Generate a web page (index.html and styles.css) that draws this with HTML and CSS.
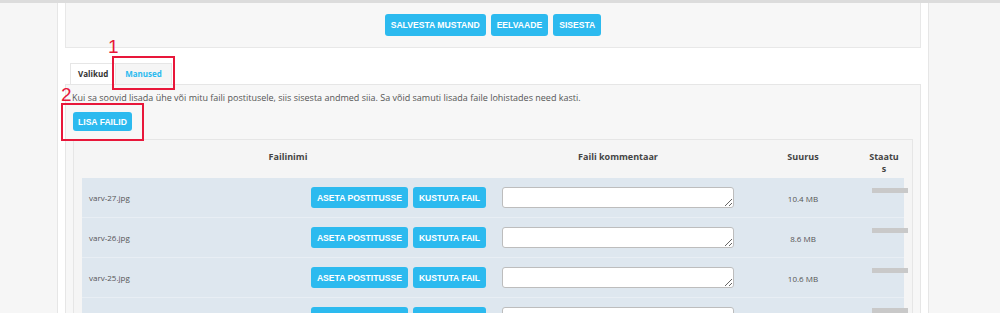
FILE: index.html
```html
<!DOCTYPE html>
<html lang="et">
<head>
    <meta charset="UTF-8">
    <meta name="viewport" content="width=device-width, initial-scale=1.0">
    <title>Manused</title>
    <link rel="stylesheet" href="styles.css">
</head>
<body>
    <div class="page">
        <div class="main">
            <div class="top-panel">
                <button class="btn">Salvesta mustand</button>
                <button class="btn">Eelvaade</button>
                <button class="btn">Sisesta</button>
            </div>

            <div class="tabs">
                <span class="tab active">Valikud</span>
                <span class="tab link">Manused</span>
            </div>

            <div class="tab-panel">
                <p class="hint">Kui sa soovid lisada ühe või mitu faili postitusele, siis sisesta andmed siia. Sa võid samuti lisada faile lohistades need kasti.</p>
                <button class="btn btn-add">Lisa failid</button>

                <div class="files">
                    <div class="files-head">
                        <div class="cell">Failinimi</div>
                        <div class="cell">Faili kommentaar</div>
                        <div class="cell">Suurus</div>
                        <div class="cell status-head">Staatus</div>
                    </div>

                    <div class="file-row">
                        <div class="cell name">
                            <span>varv-27.jpg</span>
                            <span class="actions">
                                <button class="btn btn-sm">Aseta postitusse</button>
                                <button class="btn btn-sm">Kustuta fail</button>
                            </span>
                        </div>
                        <div class="cell"><textarea class="comment"></textarea></div>
                        <div class="cell size">10.4 MB</div>
                        <div class="cell status"><span class="bar"></span></div>
                    </div>

                    <div class="file-row">
                        <div class="cell name">
                            <span>varv-26.jpg</span>
                            <span class="actions">
                                <button class="btn btn-sm">Aseta postitusse</button>
                                <button class="btn btn-sm">Kustuta fail</button>
                            </span>
                        </div>
                        <div class="cell"><textarea class="comment"></textarea></div>
                        <div class="cell size">8.6 MB</div>
                        <div class="cell status"><span class="bar"></span></div>
                    </div>

                    <div class="file-row">
                        <div class="cell name">
                            <span>varv-25.jpg</span>
                            <span class="actions">
                                <button class="btn btn-sm">Aseta postitusse</button>
                                <button class="btn btn-sm">Kustuta fail</button>
                            </span>
                        </div>
                        <div class="cell"><textarea class="comment"></textarea></div>
                        <div class="cell size">10.6 MB</div>
                        <div class="cell status"><span class="bar"></span></div>
                    </div>

                    <div class="file-row">
                        <div class="cell name">
                            <span>varv-24.jpg</span>
                            <span class="actions">
                                <button class="btn btn-sm">Aseta postitusse</button>
                                <button class="btn btn-sm">Kustuta fail</button>
                            </span>
                        </div>
                        <div class="cell"><textarea class="comment"></textarea></div>
                        <div class="cell size">9.8 MB</div>
                        <div class="cell status"><span class="bar"></span></div>
                    </div>
                </div>
            </div>
        </div>
    </div>

    <!-- annotations -->
    <span class="mark-num num-1">1</span>
    <span class="mark-box box-1"></span>
    <span class="mark-num num-2">2</span>
    <span class="mark-box box-2"></span>
</body>
</html>
```

FILE: styles.css
```css
body {
    margin: 0;
    height: 313px;
    overflow: hidden;
    background-color: #f6f6f6;
    border-top: 3px solid #dcdcdc;
    font-family: "Open Sans", "Liberation Sans", sans-serif;
    color: #555;
    position: relative;
}

.page {
    padding-left: 57px;
}

.main {
    box-sizing: border-box;
    width: 872px;
    min-height: 320px;
    padding: 0 7px;
    background-color: #fff;
    border-left: 1px solid #e6e6e6;
    border-right: 1px solid #e6e6e6;
}

.btn {
    font-family: "Liberation Sans", Arial, sans-serif;
    font-weight: bold;
    font-size: 8.6px;
    text-transform: uppercase;
    color: #fff;
    background-color: #2cbaef;
    border: none;
    border-radius: 3px;
    height: 22px;
    padding: 0 6px;
    margin: 0;
}

.top-panel {
    display: flex;
    justify-content: center;
    gap: 5px;
    padding: 11px 0;
    background-color: #f7f7f7;
    border: 1px solid #e8e8e8;
    border-top: none;
}

.tabs {
    display: flex;
    margin: 15px 0 0 5px;
}

.tab {
    font-size: 8px;
    font-weight: bold;
    color: #333;
    height: 20px;
    line-height: 20px;
    padding: 0 7px;
    border: 1px solid #e6e6e6;
    border-bottom: none;
    background-color: #fff;
}

.tab.link {
    color: #2cbaef;
    background-color: #f5f5f5;
    border-left: none;
    padding: 0 9px;
}

.tab-panel {
    background-color: #f7f7f7;
    border: 1px solid #e6e6e6;
    padding: 6px 7px 0 6px;
}

.hint {
    margin: 0;
    font-size: 9px;
    line-height: 14px;
    color: #555;
}

.btn-add {
    height: 19px;
    padding: 0 5px;
    margin: 7px 0 0 1px;
}

.files {
    margin: 8px 0 0 1px;
    padding: 0 8px;
    background-color: #f5f5f5;
    border: 1px solid #e6e6e6;
    border-bottom: none;
}

.files-head,
.file-row {
    display: grid;
    grid-template-columns: 412px 248px 122px 40px;
}

.files-head {
    height: 38px;
    font-size: 9px;
    font-weight: bold;
    color: #444;
    text-align: center;
}

.files-head .cell {
    display: block;
    padding-top: 11px;
    line-height: 12px;
}

.files-head .status-head {
    padding: 11px 4px 0;
    word-break: break-all;
}

.file-row {
    height: 40px;
    background-color: #dee7ef;
    border-bottom: 1px solid #e8eef4;
    box-sizing: border-box;
    font-size: 8px;
    color: #555;
}

.cell {
    display: flex;
    align-items: center;
    justify-content: center;
}

.cell.name {
    justify-content: space-between;
    padding: 0 8px 0 7px;
}

.actions {
    display: flex;
    gap: 5px;
}

.btn-sm {
    height: 21px;
    padding: 0 6px;
}

.comment {
    box-sizing: border-box;
    width: 232px;
    height: 21px;
    margin: 0;
    border: 1px solid #bdbdbd;
    border-radius: 3px;
    background-color: #fff;
}

.size {
    padding-top: 2px;
}

.cell.status {
    align-items: flex-start;
    justify-content: flex-start;
    padding: 10px 0 0 8px;
}

.bar {
    display: block;
    flex: none;
    width: 36px;
    height: 5px;
    background-color: #c9c9c9;
}

.mark-num {
    position: absolute;
    font-family: "Liberation Sans", Arial, sans-serif;
    font-size: 19px;
    line-height: 1;
    color: #e8173a;
}

.num-1 {
    left: 108px;
    top: 34px;
}

.num-2 {
    left: 61px;
    top: 82px;
}

.mark-box {
    position: absolute;
    border: 2px solid #e8173a;
    box-sizing: border-box;
}

.box-1 {
    left: 112px;
    top: 53px;
    width: 63px;
    height: 34px;
}

.box-2 {
    left: 61px;
    top: 100px;
    width: 83px;
    height: 38px;
}
```
